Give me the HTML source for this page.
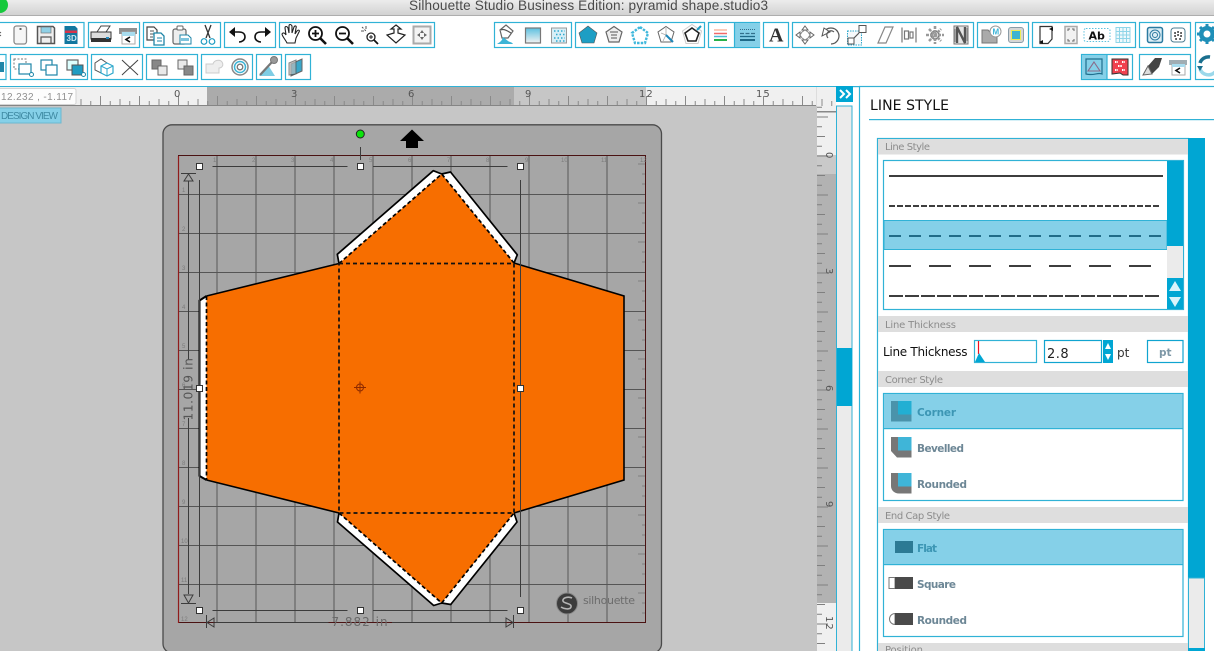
<!DOCTYPE html>
<html><head><meta charset="utf-8"><title>Silhouette Studio</title>
<style>html,body{margin:0;padding:0;background:#fff;overflow:hidden}svg{display:block;filter:blur(.3px)}
.l{font-family:"DejaVu Sans","Liberation Sans",sans-serif}
.h{font-family:"DejaVu Sans","Liberation Sans",sans-serif;font-size:10px;fill:#8c8c8c}
.o{font-family:"DejaVu Sans","Liberation Sans",sans-serif;font-size:10.5px;font-weight:bold;fill:#6d8796}
.n{font-family:"Liberation Sans",sans-serif;font-size:6px;fill:#7c7c7c}
.r{font-family:"DejaVu Sans","Liberation Sans",sans-serif;font-size:10px;fill:#555}
.g{fill:#fff;stroke:#30b2d6;stroke-width:1.2}
.i{fill:none;stroke:#555;stroke-width:1.2}
.k{fill:none;stroke:#111;stroke-width:1.6}
.t{fill:none;stroke:#1f9cc2;stroke-width:1.2}
</style></head><body>
<svg width="1214" height="651" viewBox="0 0 1214 651" xmlns="http://www.w3.org/2000/svg">
<defs>
<linearGradient id="tb" x1="0" y1="0" x2="0" y2="1"><stop offset="0" stop-color="#ececec"/><stop offset="1" stop-color="#d2d2d2"/></linearGradient>
<linearGradient id="gr" x1="0" y1="0" x2="0" y2="1"><stop offset="0" stop-color="#5cc0e0"/><stop offset="1" stop-color="#f2f2f2"/></linearGradient>
<pattern id="hr" patternUnits="userSpaceOnUse" width="39" height="20" patternTransform="translate(178,87)">
<path d="M.5,9V19M10.25,14V19M20,12V19M29.75,14V19" stroke="#8a8a8a" stroke-width="1" fill="none"/></pattern>
<pattern id="vr" patternUnits="userSpaceOnUse" width="20" height="39" patternTransform="translate(817,155.5)">
<path d="M0,.5H11M0,10.25H5M0,20H8M0,29.75H5" stroke="#808080" stroke-width="1" fill="none"/></pattern>
<pattern id="mt" patternUnits="userSpaceOnUse" width="9" height="39" patternTransform="translate(638,155.5)">
<path d="M0,8.5H8M4,18.5H8M4,28.5H8" stroke="#808080" stroke-width="1" fill="none"/></pattern>
</defs>

<!-- title bar -->
<rect width="1214" height="15" fill="url(#tb)"/><rect y="15" width="1214" height="1" fill="#aeaeae"/>
<circle cx="0" cy="5" r="8" fill="#16c93c"/>
<text x="409" y="10" font-family="Liberation Sans,sans-serif" font-size="13.6" fill="#4a4a4a" textLength="359">Silhouette Studio Business Edition: pyramid shape.studio3</text>

<!-- toolbar group boxes -->
<rect class="g" x="-3" y="22.5" width="87" height="25"/><rect class="g" x="88.5" y="22.5" width="51" height="25"/><rect class="g" x="143.5" y="22.5" width="77" height="25"/><rect class="g" x="224.5" y="22.5" width="51" height="25"/><rect class="g" x="279.5" y="22.5" width="155" height="25"/>
<rect class="g" x="494.5" y="22.5" width="77" height="25"/><rect class="g" x="575.5" y="22.5" width="129" height="25"/><rect class="g" x="708.5" y="22.5" width="51" height="25"/><rect x="735" y="23" width="25" height="24" fill="#85d0e8"/><path d="M734.5,22.5V47.5" stroke="#30b2d6" stroke-width="1.2"/><rect class="g" x="763.5" y="22.5" width="25" height="25"/><rect class="g" x="792.5" y="22.5" width="181" height="25"/><rect class="g" x="977.5" y="22.5" width="51" height="25"/><rect class="g" x="1032.5" y="22.5" width="103" height="25"/><rect class="g" x="1139.5" y="22.5" width="51" height="25"/><rect class="g" x="1195.5" y="22.5" width="25" height="57"/>
<rect class="g" x="-3" y="54.5" width="9" height="25"/><rect class="g" x="10.5" y="54.5" width="77" height="25"/><rect class="g" x="91.5" y="54.5" width="51" height="25"/><rect class="g" x="146.5" y="54.5" width="51" height="25"/><rect class="g" x="201.5" y="54.5" width="51" height="25"/><rect class="g" x="256.5" y="54.5" width="25" height="25"/><rect class="g" x="285.5" y="54.5" width="25" height="25"/>
<rect class="g" x="1081.5" y="54.5" width="51" height="25"/><rect x="1082" y="55" width="25" height="24" fill="#85d0e8"/><path d="M1107,54.5V79.5" stroke="#30b2d6" stroke-width="1.2"/><rect class="g" x="1139.5" y="54.5" width="51" height="25"/>

<!-- row 1 icons -->
<path d="M-3,30l4,3M-3,38l4,-3" stroke="#555" fill="none"/>
<rect x="14" y="26" width="12.5" height="18" rx="2.5" fill="#f6f6f6" stroke="#8a8a8a" stroke-width="1.3"/><path d="M19.5,29h2" stroke="#333" stroke-width="1.5"/>
<g transform="translate(46,35)"><path d="M-8.5,-8.5H7L8.5,-7V8.5H-8.5Z" fill="#eee" stroke="#555" stroke-width="1.5"/><rect x="-5" y="-8" width="10" height="6" fill="#8fd0e6" stroke="#777" stroke-width=".7"/><path d="M-5,8V2H5V8" class="i"/></g>
<g transform="translate(71,35)"><path d="M-6.5,-9H4L6.5,-6.5V9H-6.5Z" fill="#12779f"/><rect x="-6" y="-4.5" width="12" height="2.5" fill="#d8344a"/><text x="-4.5" y="6" font-family="Liberation Sans,sans-serif" font-weight="bold" font-size="8" fill="#cfeaf4">3D</text></g>
<g transform="translate(101,35)"><path d="M-4,-3L0,-9H9L5,-3Z" fill="#fff" stroke="#444"/><path d="M-10,-3H10V4H-10Z" fill="#ddd" stroke="#333"/><rect x="-10" y="3" width="20" height="4" fill="#333"/><rect x="5" y="2" width="3" height="2" fill="#28b"/></g>
<g transform="translate(128,35)"><rect x="-9" y="-7" width="18" height="6" fill="#8f8f8f"/><path d="M-6,-3H7V9H-6Z" fill="#fff" stroke="#aaa"/><rect x="-6" y="-3" width="13" height="4" fill="#a8dcee"/><path d="M2,2L-2,4.5L2,7" class="k" stroke-width="1.2"/></g>
<g transform="translate(155,35)"><path d="M-8,-8H-1L2,-5V5H-8Z" fill="#fff" stroke="#444" stroke-width="1.2"/><path d="M-5,-4h4M-5,-1h4M-5,2h3" stroke="#555"/><path d="M-1,-2H6L9,1V10H-1Z" fill="#fff" stroke="#1f86a8" stroke-width="1.3"/><path d="M2,3h5M2,6h5" stroke="#1f86a8"/></g>
<g transform="translate(181,35)"><rect x="-8" y="-6" width="13" height="15" rx="2" fill="#eee" stroke="#666" stroke-width="1.2"/><rect x="-4" y="-9" width="6" height="4" rx="1" fill="#fff" stroke="#666"/><path d="M-1,0H7L10,3V9H-1Z" fill="#fff" stroke="#1f86a8"/><rect x="0" y="3" width="8" height="3" fill="#7cc4de"/></g>
<g transform="translate(208,35)"><path d="M-3,-10L2,3M3,-10L-2,3" stroke="#333" stroke-width="1.3" fill="none"/><circle cx="-4" cy="6.5" r="2.8" class="t" stroke-width="1.6"/><circle cx="4" cy="6.5" r="2.8" class="t" stroke-width="1.6"/></g>
<g transform="translate(237,35)"><path d="M-5,-3H2C6,-3 8,-1 8,2C8,5 5,7 2,7" class="k"/><path d="M-8,-3L-2,-8V2Z" fill="#111"/></g>
<g transform="translate(263,35)"><path d="M5,-3H-2C-6,-3 -8,-1 -8,2C-8,5 -5,7 -2,7" class="k"/><path d="M8,-3L2,-8V2Z" fill="#111"/></g>
<g transform="translate(291,35)"><path d="M-4,8C-6,4 -9,1 -9,-1C-8,-3 -6,-2 -5,0L-6,-7C-6,-9 -4,-9 -3,-7L-2,-2L-2,-9C-2,-11 0,-11 1,-9L1,-2L3,-8C4,-10 6,-9 5,-7L4,-1L6,-4C8,-6 9,-4 8,-3L5,3L4,8Z" fill="#fff" stroke="#222" stroke-width="1.1"/></g>
<g transform="translate(317,35)"><circle cx="-1.5" cy="-1.5" r="6.5" fill="#fff" stroke="#111" stroke-width="1.8"/><path d="M-5,-1.5h7M-1.5,-5v7" stroke="#111" stroke-width="1.8"/><path d="M3.5,3.5L9,9" stroke="#111" stroke-width="2.6"/></g>
<g transform="translate(344,35)"><circle cx="-1.5" cy="-1.5" r="6.5" fill="#fff" stroke="#111" stroke-width="1.8"/><path d="M-5,-1.5h7" stroke="#111" stroke-width="1.8"/><path d="M3.5,3.5L9,9" stroke="#111" stroke-width="2.6"/></g>
<g transform="translate(370,35)"><circle cx="1" cy="2" r="4" fill="#fff" stroke="#222" stroke-width="1.3"/><path d="M-1,2h4M1,0v4" stroke="#222"/><path d="M4,5L8,9" stroke="#111" stroke-width="1.8"/><path d="M-8,-8L-3,-3" stroke="#555" stroke-dasharray="2 1.5"/><path d="M-4,-9v3M-9,-4h3" stroke="#555"/></g>
<g transform="translate(396,35)"><path d="M0,-10L5,-6H2V-2L9,0L0,8L-9,0L-2,-2V-6H-5Z" fill="#fff" stroke="#222" stroke-width="1.2"/></g>
<g transform="translate(422,35)"><rect x="-8.5" y="-8.5" width="17" height="17" fill="#f3f3f3" stroke="#aaa" stroke-width="2"/><path d="M0,-5L2,-2H-2ZM0,5L2,2H-2ZM-5,0L-2,-2V2ZM5,0L2,-2V2Z" fill="#666"/></g>

<g transform="translate(506,35)"><path d="M-6,-5L0,-10L7,-4L2,3H-4Z" fill="#fff" stroke="#666" stroke-width="1.2"/><path d="M-5,-5C-2,-7 3,-3 5,-2" class="i"/><path d="M-9,9C-6,7 -4,6 -3,2L2,6C3,7 6,7 7,9Z" fill="#3cb4d6"/></g>
<rect x="525.5" y="28" width="15" height="15" fill="url(#gr)" stroke="#777" stroke-width="1.2"/>
<g><rect x="551.5" y="28" width="15" height="15" fill="#d8eef6" stroke="#999"/><path d="M554,31h11M556,34.5h10M554,38h11M556,41h9" stroke="#2fa9cf" stroke-width="1.5" stroke-dasharray="1.5 2"/></g>
<path d="M588,26L597,33L594,43H582L579,33Z" fill="#1d9ec4" stroke="#555" stroke-width=".6"/>
<g transform="translate(614,35)"><path d="M0,-8.5L8,-3L5,7H-5L-8,-3Z" fill="#eee" stroke="#666" stroke-width="1.2"/><path d="M-4,-3H4M-3,0H3M-3,3H3" stroke="#555"/></g>
<path d="M640,27L648,33L645,43H635L632,33Z" fill="none" stroke="#40b8dc" stroke-width="2.4" stroke-dasharray="2.5 1.2"/>
<g transform="translate(666,35)"><path d="M0,-8.5L8,-3L5,7H-5L-8,-3Z" fill="#fff" stroke="#666"/><path d="M-5,-2L0,0M0,-7V0M-3,6L0,0" stroke="#aaa" stroke-width=".8"/><path d="M0,0L7,7" stroke="#1f86b8" stroke-width="2"/></g>
<g transform="translate(692,35)"><path d="M0,-7L7,-2L4,6H-4L-7,-2Z" fill="#fff" stroke="#222" stroke-width="1.6"/><path d="M-9.5,-4L0,-10.5L9.5,-4L6,8.5H-6Z" fill="none" stroke="#ccc"/><path d="M5,-5L9,-9" stroke="#1f9cc2" stroke-width="2"/></g>
<path d="M714,30H727" stroke="#f9b9a0" stroke-width="1.5"/><path d="M714,33.5H727" stroke="#f26a6a" stroke-width="1.5"/><path d="M714,36.5H727" stroke="#4fb8d8" stroke-width="1.5"/><path d="M714,40H727" stroke="#27b14a" stroke-width="2"/>
<path d="M740,29.5H755" stroke="#33708c" stroke-width="1" stroke-dasharray="1 1"/><path d="M740,33.5H755" stroke="#33708c" stroke-width="1.3" stroke-dasharray="4 1.5"/><path d="M740,36.5H755" stroke="#1f6a88" stroke-width="1.3"/><path d="M740,40H755" stroke="#1f6a88" stroke-width="2"/>
<text x="769" y="41.5" font-family="Liberation Serif,serif" font-weight="bold" font-size="20" fill="#333">A</text>
<g transform="translate(805,35)"><path d="M0,-9L3,-5H-3ZM0,9L3,5H-3ZM-9,0L-5,-3V3ZM9,0L5,-3V3Z" fill="#fff" stroke="#666"/><path d="M-3,-3L0,-5L3,-3L5,0L3,3L0,5L-3,3L-5,0Z" fill="#fff" stroke="#888"/></g>
<g transform="translate(831,35)"><path d="M-7,-3A8,8 0 1 1 0,9" class="i" stroke-width="1.4"/><path d="M-9,1L-7,-7L-1,-3Z" fill="#fff" stroke="#555"/><path d="M-3,3A4,4 0 0 1 3,-3" class="i"/></g>
<g transform="translate(857,35)"><rect x="-9.5" y="-4" width="14" height="14" fill="#f5f9fb" stroke="#2ea8cc" stroke-dasharray="1.5 1"/><rect x="-9" y="3" width="6" height="6" fill="#fff" stroke="#555"/><rect x="2" y="-9.5" width="7" height="7" fill="#fff" stroke="#555"/><path d="M-3,3L2,-2" class="i"/></g>
<path d="M878,43L885,27H893L886,43Z" fill="#fff" stroke="#888" stroke-width="1.2"/>
<g stroke="#777" stroke-width="1.2" fill="none"><path d="M902,27.5V42.5M916,27.5V42.5"/><rect x="904.5" y="31" width="4" height="8"/><rect x="910" y="32" width="3" height="6"/></g>
<g transform="translate(935,35)"><circle r="4" fill="none" stroke="#666" stroke-width="1.5"/><path d="M0,-9V9M-9,0H9M-6,-6L6,6M-6,6L6,-6" stroke="#999" stroke-width="2.6" stroke-dasharray="3 1"/></g>
<g transform="translate(961,35)"><rect x="-7" y="-9" width="14" height="18" fill="#e5e5e5" stroke="#777"/><path d="M-4,8V-8L4,8V-8" fill="none" stroke="#555" stroke-width="2.4"/><path d="M-6,-6L-6,7M6,-7V6" stroke="#999"/></g>
<g transform="translate(993,35)"><path d="M-11,-5H-5L-3,-3H4V8H-11Z" fill="#aaa" stroke="#777"/><circle cx="2.5" cy="-3.5" r="5.5" fill="#fff" stroke="#999"/><text x="-.5" y="-.5" font-family="Liberation Sans,sans-serif" font-size="8" font-weight="bold" fill="#3db4d8">M</text></g>
<g><rect x="1008.5" y="27.5" width="15" height="15" rx="2.5" fill="#d6d6d6" stroke="#8a9ca8"/><rect x="1011" y="30" width="10" height="10" fill="#ecec52"/><rect x="1012" y="31" width="8" height="8" fill="#3cb4d0"/></g>
<g transform="translate(1046,35)"><path d="M-6,-8.5H6V4L2,8.5H-6Z" fill="#fff" stroke="#333" stroke-width="1.2"/><path d="M7,-8L3,-6L7,-4Z" fill="#111"/><path d="M-7,7L-3,5L-3,9Z" fill="#111"/></g>
<g transform="translate(1071,35)"><rect x="-6" y="-8.5" width="12" height="17" fill="#f2f2f2" stroke="#aaa" stroke-width="1.5"/><path d="M-3,-4V-6H-1M1,-6H3V-4M3,4V6H1M-1,6H-3V4" stroke="#666" fill="none"/></g>
<g transform="translate(1097,35)"><rect x="-13" y="-6.5" width="26" height="13" rx="2" fill="#fff" stroke="#5fc2de" stroke-dasharray="1.5 1.5"/><text x="-8.5" y="4.5" font-family="DejaVu Sans,sans-serif" font-size="11" font-weight="bold" fill="#111">Ab</text></g>
<g stroke="#8fd5e8" stroke-width="1" fill="#eff9fc"><rect x="1116" y="27.5" width="14" height="15"/><path d="M1119.5,27.5V42.5M1123,27.5V42.5M1126.5,27.5V42.5M1116,31.5H1130M1116,35H1130M1116,38.5H1130" fill="none"/></g>
<g transform="translate(1155,35)"><rect x="-7.5" y="-7.5" width="15" height="15" rx="2" fill="#ddeef5" stroke="#2b7aa0" stroke-width="1.5"/><circle r="5" fill="none" stroke="#2b7aa0"/><circle r="2.5" fill="none" stroke="#2b7aa0"/></g>
<g transform="translate(1178,35)"><rect x="-7" y="-7" width="14" height="14" rx="3" fill="#fff" stroke="#4e7c92"/><path d="M-3,-2h.1M0,-3h.1M3,-2h.1M-3,1h.1M0,0h.1M3,1h.1M-2,4h.1M2,4h.1" stroke="#111" stroke-width="1.8" stroke-linecap="round"/></g>
<g transform="translate(1207,34)"><circle r="6" fill="none" stroke="#1f8fb8" stroke-width="4"/><path d="M0,-10V10M-10,0H10M-7,-7L7,7M-7,7L7,-7" stroke="#1f8fb8" stroke-width="3"/><circle r="3.5" fill="#fff"/></g>
<g transform="translate(1208,66)"><path d="M-8,-3A9,9 0 0 1 2,-9" fill="none" stroke="#1a6f8e" stroke-width="3.5"/><path d="M-8,3A9,9 0 0 0 7,6" fill="none" stroke="#9bd8ea" stroke-width="3.5"/><path d="M-11,0L-5,0L-8,5Z" fill="#1a6f8e"/></g>

<!-- row 2 icons -->
<rect x="-2" y="62" width="6" height="10" fill="#1f86a8"/>
<g transform="translate(23,67)"><rect x="-9" y="-8" width="12" height="10" fill="none" stroke="#777" stroke-dasharray="2 1.5"/><rect x="-4" y="-3" width="12" height="10" fill="#fff" stroke="#1f86a8" stroke-width="1.2"/><circle cx="8.5" cy="7.5" r="2" fill="#fff" stroke="#1f86a8"/></g>
<g transform="translate(49,67)"><rect x="-8" y="-7" width="11" height="10" fill="#fff" stroke="#1f86a8" stroke-width="1.2"/><rect x="-3" y="-2" width="11" height="10" fill="#fff" stroke="#1f86a8" stroke-width="1.2"/></g>
<g transform="translate(75,67)"><rect x="-8" y="-7" width="11" height="10" fill="#dff" stroke="#666" stroke-width="1.2"/><rect x="-3" y="-2" width="11" height="10" fill="#1f9cc2" stroke="#555"/><circle cx="8.5" cy="7.5" r="2" fill="#fff" stroke="#1f86a8"/></g>
<g transform="translate(104,67)"><path d="M-9,-4L-3,-8L3,-4V3L-3,6L-9,3Z" fill="#fff" stroke="#555"/><path d="M-3,-1L3,-4L9,-1V6L3,9L-3,6Z" fill="#fff" stroke="#2ea8cc" stroke-width="1.2"/><path d="M-3,-1L3,2L9,-1M3,2V9" stroke="#2ea8cc" fill="none"/></g>
<path d="M122,60C126,64 134,71 138,75M138,60C134,64 126,71 122,75" fill="none" stroke="#444" stroke-width="1"/>
<g transform="translate(159,67)"><rect x="-7" y="-7" width="9" height="9" fill="#888" stroke="#666"/><rect x="-1" y="-1" width="9" height="9" fill="#e9e9e9" stroke="#666"/></g>
<g transform="translate(185,67)"><rect x="-7" y="-7" width="9" height="9" fill="#e9e9e9" stroke="#666"/><rect x="-1" y="-1" width="9" height="9" fill="#888" stroke="#666"/></g>
<path d="M206,73V64H213C214,60 220,59 222,62C224,65 222,68 219,68V73Z" fill="#eee" stroke="#ccc"/>
<g transform="translate(240,67)" fill="none"><circle r="8" stroke="#888" stroke-width="1.5"/><circle r="5.5" stroke="#3cb4d6" stroke-width="1.5"/><circle r="2.8" stroke="#777" stroke-width="1.3"/></g>
<g transform="translate(268,67)"><path d="M-9,9L0,-2L7,9Z" fill="#7fcde4"/><path d="M-8,8L4,-5" stroke="#777" stroke-width="2.2"/><circle cx="6" cy="-7" r="3.5" fill="#999" stroke="#777"/></g>
<g transform="translate(297,67)"><path d="M-6,-3L5,-8V4L-6,9Z" fill="#3aa7c9" stroke="#666"/><path d="M-8,-4L-1,-7V7L-8,8Z" fill="#bbb" stroke="#555" opacity=".7"/></g>
<g transform="translate(1094,67)"><path d="M-8,-8H8V7C4,5 0,9 -8,7Z" fill="none" stroke="#1f6f8e" stroke-width="1.2"/><path d="M0,-5L6,4H-6Z" fill="none" stroke="#8a6a88" stroke-width="1.1"/></g>
<g transform="translate(1120,67)"><path d="M-8,-8H8V8H3L0,6L-8,7Z" fill="#f0414f" stroke="#333"/><path d="M-5,-5h3M2,-5h3M-2,-1h4M-5,3h3M2,3h3" stroke="#fff" stroke-width="2" stroke-dasharray="1.5 .8"/></g>
<g transform="translate(1152,67)"><path d="M-4,-1L3,-9H10L7,0L0,7Z" fill="#444"/><path d="M-9,8L-4,-1L0,7Z" fill="#ddd" stroke="#666"/></g>
<g transform="translate(1178,67)"><rect x="-9" y="-7" width="18" height="5" fill="#a0adb3"/><path d="M-6,-2H7V8H-6Z" fill="#fff" stroke="#aaa"/><rect x="-6" y="-3" width="13" height="3" fill="#a8dcee"/><path d="M2,1L-2,3.5L2,6" class="k" stroke-width="1.2"/></g>

<!-- top border and canvas -->
<rect x="0" y="86" width="1214" height="1.2" fill="#30b2d6"/>
<rect x="0" y="87" width="836" height="20" fill="#f0f0f0"/>
<rect x="207" y="87" width="307" height="19" fill="#ababab"/><rect x="514" y="87" width="132" height="19" fill="#c6c6c6"/>
<rect x="0" y="87" width="836" height="19" fill="url(#hr)"/>
<rect x="0" y="105" width="817" height="1" fill="#858585"/>
<g class="r" fill="#555"><text x="174" y="97">0</text><text x="291" y="97">3</text><text x="408" y="97">6</text><text x="525" y="97">9</text><text x="639" y="97" letter-spacing="1">12</text><text x="756" y="97" letter-spacing="1">15</text></g>
<rect x="0" y="106" width="817" height="545" fill="#c6c6c6"/>
<rect x="-4" y="88.5" width="80" height="16" rx="2" fill="#fdfdfd" stroke="#d4d4d4"/>
<text x="1" y="100" font-family="Liberation Sans,sans-serif" font-size="10" fill="#909090" textLength="72">12.232 , -1.117</text>
<rect x="-2" y="108" width="63" height="15" fill="#85d0e8" stroke="#6cb8d0"/>
<text x="1" y="119" font-family="Liberation Sans,sans-serif" font-size="10" fill="#3f8aa3" textLength="57">DESIGN VIEW</text>

<!-- mat -->
<rect x="163" y="124.8" width="498.5" height="528" rx="9" fill="#a6a6a6" stroke="#4a4a4a" stroke-width="1.3"/>
<g stroke="#7f7f7f" stroke-width="2" fill="none"><path d="M217,156V623M256,156V623M295,156V623M334,156V623M373,156V623M412,156V623M451,156V623M490,156V623M529,156V623M568,156V623M607,156V623"/></g>
<g stroke="#555" stroke-width="1" fill="none"><path d="M178,194.5H646M178,233.5H646M178,272.5H646M178,311.5H646M178,350.5H646M178,389.5H646M178,428.5H646M178,467.5H646M178,506.5H646M178,545.5H646M178,584.5H646"/></g>
<rect x="638" y="156" width="8" height="466" fill="url(#mt)"/>
<rect x="178.5" y="155.5" width="467" height="467" fill="none" stroke="#4a1212" stroke-width="1"/><path d="M178.5,156V623" stroke="#8f1c1c" stroke-width="1.2"/>
<g class="n"><text x="213" y="162">1</text><text x="252" y="162">2</text><text x="291" y="162">3</text><text x="330" y="162">4</text><text x="369" y="162">5</text><text x="408" y="162">6</text><text x="447" y="162">7</text><text x="486" y="162">8</text><text x="525" y="162">9</text><text x="561" y="162">10</text><text x="601" y="162">11</text><text x="640" y="162">12</text>
<text x="182" y="192">1</text><text x="182" y="231">2</text><text x="182" y="270">3</text><text x="182" y="309">4</text><text x="182" y="348">5</text><text x="182" y="387">6</text><text x="182" y="426">7</text><text x="182" y="465">8</text><text x="182" y="504">9</text><text x="181" y="543">10</text><text x="181" y="582">11</text><text x="181" y="621">12</text></g>

<!-- shape tabs -->
<g fill="#fff">
<path d="M339,263.5L337.3,254.3L433.3,170.7L441.7,174L450.5,172L517.3,254.8L514,263Z"/>
<path d="M339,513L337.5,522L433.7,605.5L441.7,603L450.7,604.5L517,522L514,513Z"/>
<path d="M206.5,296L199.5,300.5V476L206.5,480Z"/>
</g>
<g fill="none" stroke="#000" stroke-width="1.7" stroke-linejoin="round">
<path d="M339,263.5L337.3,254.3L433.3,170.7L441.7,174L450.5,172L517.3,254.8L514,263"/>
<path d="M339,513L337.5,522L433.7,605.5L441.7,603L450.7,604.5L517,522L514,513"/>
<path d="M206.5,296L199.5,300.5V476L206.5,480" stroke-width="2"/>
</g>
<!-- shape body -->
<path d="M206.5,296L339,263.5L441.7,174L514,263L624,296V480L514,513L441.7,603L339,513L206.5,480Z" fill="#f76e00"/>
<path d="M206.5,296L339,263.5M514,263L624,296V480L514,513M339,513L206.5,480" fill="none" stroke="#000" stroke-width="1.6"/>
<path d="M339,263.5L441.7,174L514,263M339,513L441.7,603L514,513M206.5,296V480" fill="none" stroke="#000" stroke-width="1.7" stroke-dasharray="4 2.5"/>
<path d="M339,263.5H514V513H339Z" fill="none" stroke="#111" stroke-width="1.7" stroke-dasharray="4 3"/>

<!-- selection -->
<g stroke="#3c3c3c" stroke-width="1" fill="none">
<path d="M212.5,166.5H347.5M373,166.5H507.5M212.5,610.5H347.5M373,610.5H507.5M199.5,180V597M520.5,180V597M360.5,147V160"/>
<path d="M188.5,181V360M188.5,418V594M181,173.5H196M181,603.5H196M184,181L188.5,174L193,181ZM184,595L188.5,603L193,595Z"/>
<path d="M215,622.5H328.5M392,622.5H505M206.5,615V628M513.5,615V628M214,618L207,622.5L214,627ZM506,618L513,622.5L506,627Z"/>
</g>
<text transform="translate(192.5,389) rotate(-90)" text-anchor="middle" font-family="DejaVu Sans,sans-serif" font-size="12" fill="#555" letter-spacing=".7">11.019 in</text>
<text x="360" y="626" text-anchor="middle" font-family="DejaVu Sans,sans-serif" font-size="12" fill="#6a6a6a" letter-spacing="1">7.882 in</text>
<g fill="#fff" stroke="#333" stroke-width="1"><rect x="196.5" y="163.5" width="6" height="6"/><rect x="357.5" y="163.5" width="6" height="6"/><rect x="517.5" y="163.5" width="6" height="6"/><rect x="196.5" y="385.5" width="6" height="6"/><rect x="517.5" y="385.5" width="6" height="6"/><rect x="196.5" y="607.5" width="6" height="6"/><rect x="357.5" y="607.5" width="6" height="6"/><rect x="517.5" y="607.5" width="6" height="6"/></g>
<circle cx="360.3" cy="134" r="4" fill="#0be40b" stroke="#222"/>
<path d="M412,129.5L424,141H418V148H406V141H400Z" fill="#000"/>
<g stroke="#8e2a00" stroke-width="1" fill="none"><circle cx="360" cy="387.5" r="3.5"/><path d="M354,387.5H366M360,381.5V393.5"/></g>
<circle cx="567" cy="603.5" r="10.5" fill="#3c3c3c" stroke="#888" stroke-width="1"/>
<path d="M572,598C568,596 562,598 563,601C564,604 572,603 571,607C570,610 564,609 561,607" fill="none" stroke="#b5b5b5" stroke-width="1.6"/>
<text x="583" y="604" font-family="DejaVu Sans,sans-serif" font-size="11" fill="#6c6c6c" textLength="52">silhouette</text>

<!-- vertical ruler -->
<rect x="817" y="106" width="19" height="545" fill="#f0f0f0"/><rect x="817" y="155" width="19" height="19" fill="#c9c9c9"/><rect x="817" y="174" width="19" height="429" fill="#b2b2b2"/>
<rect x="817" y="106" width="19" height="545" fill="url(#vr)"/>
<rect x="817" y="111" width="19" height="1.5" fill="#888"/>
<rect x="816" y="87" width="1" height="19" fill="#ddd"/>
<g class="r" fill="#444"><text transform="translate(826,152) rotate(90)">0</text><text transform="translate(826,268) rotate(90)">3</text><text transform="translate(826,385) rotate(90)">6</text><text transform="translate(826,501) rotate(90)">9</text><text transform="translate(826,616) rotate(90)" letter-spacing="1">12</text></g>

<!-- middle scrollbar -->
<rect x="836" y="86" width="17" height="16" fill="#00a6d3"/>
<path d="M840,90L844,94L840,98M846,90L850,94L846,98" fill="none" stroke="#fff" stroke-width="2"/>
<rect x="836.5" y="106" width="15.5" height="546" fill="#ebebeb" stroke="#30b2d6"/>
<rect x="837" y="348" width="15" height="58" fill="#00a6d3"/>

<!-- panel -->
<rect x="859.5" y="86.5" width="360" height="570" fill="#fff" stroke="#30b2d6" stroke-width="1.2"/>
<text x="870" y="110" font-family="DejaVu Sans,sans-serif" font-size="14" fill="#111" textLength="79">LINE STYLE</text>
<rect x="869" y="119" width="345" height="1.2" fill="#30b2d6"/>
<rect x="877.5" y="138.5" width="311" height="520" fill="#fff" stroke="#30b2d6" stroke-width="1.2"/>
<rect x="878" y="139" width="310" height="15.5" fill="#dedede"/><text class="h" x="885" y="150" textLength="45">Line Style</text>

<rect x="883.5" y="160.5" width="300" height="149" fill="#fff" stroke="#30b2d6" stroke-width="1.2"/>
<rect x="884" y="220.5" width="283" height="29" fill="#85d0e8" stroke="#30b2d6"/>
<rect x="1167" y="161" width="16" height="85" fill="#00a6d3"/><rect x="1167" y="246" width="16" height="32" fill="#ebebeb"/><rect x="1167" y="278" width="16" height="31" fill="#00a6d3"/>
<path d="M1175,281L1181,291H1169ZM1175,307L1181,297H1169Z" fill="#d9f3fa"/>
<path d="M889,176H1163" stroke="#3e3e3e" stroke-width="2"/>
<path d="M889,206H1160" stroke="#3e3e3e" stroke-width="2" stroke-dasharray="6 2"/>
<path d="M889,236H1162" stroke="#216c88" stroke-width="2" stroke-dasharray="12 8"/>
<path d="M889,266H1152" stroke="#3e3e3e" stroke-width="2" stroke-dasharray="22 18"/>
<path d="M889,296H1160" stroke="#3e3e3e" stroke-width="2" stroke-dasharray="14 2"/>

<rect x="878" y="316" width="310" height="16" fill="#dedede"/><text class="h" x="885" y="328" textLength="71">Line Thickness</text>
<text class="l" x="883" y="356" font-size="12" fill="#111" textLength="84.5">Line Thickness</text>
<rect x="974.5" y="340.5" width="62" height="22" fill="#fff" stroke="#30b2d6" stroke-width="1.2"/>
<path d="M978.5,341V354" stroke="#f01020" stroke-width="1.2"/><path d="M975,362L979,353L985,362Z" fill="#00a6d3"/>
<rect x="1044.5" y="340.5" width="57" height="22" fill="#fff" stroke="#10a4d0" stroke-width="1.2"/>
<text x="1047" y="358" font-family="DejaVu Sans,sans-serif" font-size="13" fill="#222" letter-spacing=".5">2.8</text>
<rect x="1103" y="340" width="10" height="23" fill="#00a6d3"/><path d="M1108,343L1111,349H1105ZM1108,360L1111,354H1105Z" fill="#fff"/>
<text class="l" x="1117" y="357" font-size="12" fill="#333">pt</text>
<rect x="1147.5" y="340.5" width="35.5" height="22" fill="#fff" stroke="#10a4d0" stroke-width="1.2"/>
<text x="1159" y="356" font-family="DejaVu Sans,sans-serif" font-weight="bold" font-size="10.5" fill="#7d97a6">pt</text>

<rect x="878" y="371" width="310" height="16" fill="#dedede"/><text class="h" x="885" y="383" textLength="58">Corner Style</text>
<rect x="883.5" y="393.5" width="299.5" height="107" fill="#fff" stroke="#30b2d6" stroke-width="1.2"/>
<rect x="884" y="394" width="298.5" height="34.5" fill="#85d0e8"/><rect x="884" y="428" width="299" height="1.2" fill="#30b2d6"/>
<rect x="891" y="401" width="20.5" height="20.5" fill="#4a93ab"/><rect x="898" y="401" width="13.5" height="13.5" fill="#22afd3"/>
<text class="o" x="917" y="416" style="fill:#3c96b4" textLength="39">Corner</text>
<path d="M891,437H911.5V457.5H897L891,451Z" fill="#777"/><rect x="898" y="437" width="13.5" height="13.5" fill="#3fb5d8"/>
<text class="o" x="917" y="452" textLength="47">Bevelled</text>
<path d="M891,473H911.5V493.5H899C894,493.5 891,490 891,486Z" fill="#777"/><rect x="898" y="473" width="13.5" height="13.5" fill="#3fb5d8"/>
<text class="o" x="917" y="488" textLength="50">Rounded</text>

<rect x="878" y="507" width="310" height="16" fill="#dedede"/><text class="h" x="885" y="519" textLength="65">End Cap Style</text>
<rect x="883.5" y="529.5" width="299.5" height="107" fill="#fff" stroke="#30b2d6" stroke-width="1.2"/>
<rect x="884" y="530" width="298.5" height="34.5" fill="#85d0e8"/><rect x="884" y="564" width="299" height="1.2" fill="#30b2d6"/>
<rect x="895" y="541" width="18" height="12" fill="#2c7a94"/>
<text class="o" x="917" y="552" style="fill:#3c96b4" textLength="20">Flat</text>
<rect x="889" y="577.5" width="6" height="11" fill="#fff" stroke="#777"/><rect x="895" y="577" width="18" height="12" fill="#4a4a4a"/>
<text class="o" x="917" y="588" textLength="39">Square</text>
<path d="M895,613.5A5.5,5.5 0 0 0 895,624.5Z" fill="#fff" stroke="#777"/><rect x="895" y="613" width="18" height="12" fill="#4a4a4a"/>
<text class="o" x="917" y="624" textLength="50">Rounded</text>
<rect x="878" y="643" width="310" height="10" fill="#dedede"/><text class="h" x="885" y="653" textLength="38">Position</text>

<!-- right scrollbar -->
<rect x="1188" y="138" width="17" height="440" fill="#00a6d3"/>
<rect x="1188.5" y="578" width="16" height="71" fill="#ebebeb" stroke="#30b2d6"/>
<rect x="1188" y="648" width="17" height="3" fill="#00a6d3"/>
</svg>
</body></html>
